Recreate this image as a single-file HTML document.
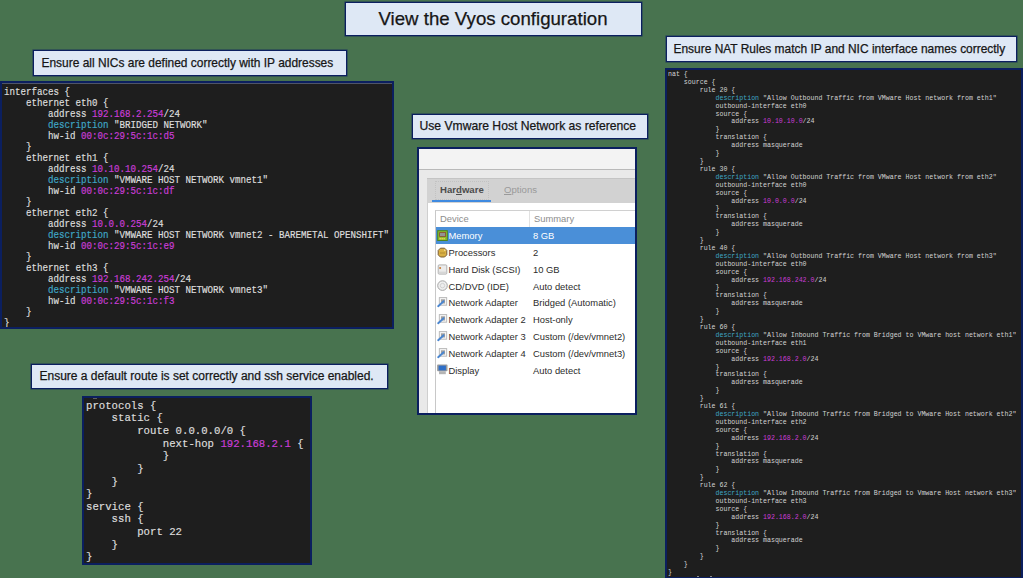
<!DOCTYPE html>
<html><head><meta charset="utf-8">
<style>
html,body{margin:0;padding:0;}
body{width:1023px;height:578px;overflow:hidden;background:#48734f;position:relative;font-family:"Liberation Sans",sans-serif;}
.lbl{position:absolute;box-sizing:border-box;background:#dee8f5;border:1.5px solid #0b1f5f;box-shadow:0 0 0 0.6px rgba(11,31,95,0.6);color:#161616;white-space:nowrap;}
.lbl span{-webkit-text-stroke:0.25px #161616;}
.lbl span{position:absolute;left:0;top:0;transform-origin:0 0;}
.code{position:absolute;box-sizing:border-box;background:#1e1e1e;border:2px solid #0b1f5f;overflow:hidden;}
.code pre{position:absolute;margin:0;font-family:"Liberation Mono",monospace;color:#dcdcdc;white-space:pre;-webkit-text-stroke:0.2px currentColor;}
.p{color:#c93dd6;}
.c{color:#3fa6c6;}
</style></head>
<body>
<!-- title -->
<div class="lbl" style="left:345px;top:2px;width:297px;height:34px;">
  <span style="left:32.5px;top:5.3px;font-size:18.65px;">View the Vyos configuration</span>
</div>
<!-- labels -->
<div class="lbl" style="left:33px;top:50px;width:314px;height:25.5px;">
  <span style="left:7.5px;top:4.5px;font-size:11.95px;">Ensure all NICs are defined correctly with IP addresses</span>
</div>
<div class="lbl" style="left:411.5px;top:113.5px;width:236px;height:25px;">
  <span style="left:7px;top:4.5px;font-size:12.15px;">Use Vmware Host Network as reference</span>
</div>
<div class="lbl" style="left:31px;top:363.5px;width:357px;height:25px;">
  <span style="left:7.5px;top:4.5px;font-size:12px;">Ensure a default route is set correctly and ssh service enabled.</span>
</div>
<div class="lbl" style="left:665.5px;top:36px;width:351px;height:25.5px;">
  <span style="left:7px;top:4.5px;font-size:11.95px;">Ensure NAT Rules match IP and NIC interface names correctly</span>
</div>

<!-- code 1 -->
<div class="code" style="left:0px;top:81px;width:394px;height:248px;box-shadow:inset 0 1px 0 #4f5568;">
<pre style="left:1.5px;top:4px;font-size:10.5px;line-height:11px;transform:scaleX(0.873);transform-origin:0 0;">interfaces {
    ethernet eth0 {
        address <span class="p">192.168.2.254</span>/24
        <span class="c">description</span> "BRIDGED NETWORK"
        hw-id <span class="p">00:0c:29:5c:1c:d5</span>
    }
    ethernet eth1 {
        address <span class="p">10.10.10.254</span>/24
        <span class="c">description</span> "VMWARE HOST NETWORK vmnet1"
        hw-id <span class="p">00:0c:29:5c:1c:df</span>
    }
    ethernet eth2 {
        address <span class="p">10.0.0.254</span>/24
        <span class="c">description</span> "VMWARE HOST NETWORK vmnet2 - BAREMETAL OPENSHIFT"
        hw-id <span class="p">00:0c:29:5c:1c:e9</span>
    }
    ethernet eth3 {
        address <span class="p">192.168.242.254</span>/24
        <span class="c">description</span> "VMWARE HOST NETWORK vmnet3"
        hw-id <span class="p">00:0c:29:5c:1c:f3</span>
    }
}</pre>
</div>

<!-- code 2 -->
<div class="code" style="left:82px;top:396px;width:230px;height:169px;">
<pre style="left:2px;top:1.8px;font-size:11.8px;line-height:12.63px;transform:scaleX(0.904);transform-origin:0 0;">protocols {
    static {
        route 0.0.0.0/0 {
            next-hop <span class="p">192.168.2.1</span> {
            }
        }
    }
}
service {
    ssh {
        port 22
    }
}</pre>
<div style="position:absolute;left:9px;top:0px;width:4px;height:1px;background:#5f5f5f;"></div>
</div>

<!-- code 3 NAT -->
<div class="code" style="left:665px;top:68px;width:358px;height:511px;">
<pre style="left:1px;top:1px;color:#d2d2d2;-webkit-text-stroke:0;font-size:7.3px;line-height:7.9px;transform:scaleX(0.9041);transform-origin:0 0;">nat {
    source {
        rule 20 {
            <span class="c">description</span> "Allow Outbound Traffic from VMware Host network from eth1"
            outbound-interface eth0
            source {
                address <span class="p">10.10.10.0</span>/24
            }
            translation {
                address masquerade
            }
        }
        rule 30 {
            <span class="c">description</span> "Allow Outbound Traffic from VMware Host network from eth2"
            outbound-interface eth0
            source {
                address <span class="p">10.0.0.0</span>/24
            }
            translation {
                address masquerade
            }
        }
        rule 40 {
            <span class="c">description</span> "Allow Outbound Traffic from VMware Host network from eth3"
            outbound-interface eth0
            source {
                address <span class="p">192.168.242.0</span>/24
            }
            translation {
                address masquerade
            }
        }
        rule 60 {
            <span class="c">description</span> "Allow Inbound Traffic from Bridged to VMware host network eth1"
            outbound-interface eth1
            source {
                address <span class="p">192.168.2.0</span>/24
            }
            translation {
                address masquerade
            }
        }
        rule 61 {
            <span class="c">description</span> "Allow Inbound Traffic from Bridged to VMware Host network eth2"
            outbound-interface eth2
            source {
                address <span class="p">192.168.2.0</span>/24
            }
            translation {
                address masquerade
            }
        }
        rule 62 {
            <span class="c">description</span> "Allow Inbound Traffic from Bridged to Vmware Host network eth3"
            outbound-interface eth3
            source {
                address <span class="p">192.168.2.0</span>/24
            }
            translation {
                address masquerade
            }
        }
    }
}</pre>
<div style="position:absolute;left:30px;top:506px;width:2px;height:1px;background:#8a8a8a;"></div>
<div style="position:absolute;left:43px;top:506px;width:2px;height:1px;background:#8a8a8a;"></div>
</div>

<!-- VMware window -->
<div id="vm" style="position:absolute;left:417px;top:147px;width:220px;height:268px;box-sizing:border-box;border:2px solid #0b1f5f;background:#e9e9e9;overflow:hidden;font-family:'Liberation Sans',sans-serif;">
 <div style="position:absolute;left:0;top:0;width:216px;height:20px;background:#f3f3f3;border-bottom:1px solid #b9b9b9;"></div>
 <div style="position:absolute;left:8px;top:29px;width:208px;height:25px;background:#d2d2d2;border-top:1px solid #c4c4c4;"></div>
 <div style="position:absolute;left:16px;top:32px;width:54px;height:19px;border:1px dotted #c2c2c2;box-sizing:border-box;"></div>
 <div style="position:absolute;left:13px;top:51px;width:58.5px;height:2px;background:#3f8ae0;"></div>
 <div style="position:absolute;left:21px;top:35.2px;font-size:9.6px;font-weight:bold;color:#4c4c4c;">Har<u>d</u>ware</div>
 <div style="position:absolute;left:85px;top:35.2px;font-size:9.6px;color:#9a9a9a;"><u>O</u>ptions</div>
 <div style="position:absolute;left:8px;top:54px;width:208px;height:210px;background:#ffffff;border-left:1px solid #cfcfcf;box-sizing:border-box;"></div>
 <div style="position:absolute;left:16px;top:61px;width:200px;height:210px;border-left:1px solid #c8c8c8;border-top:1px solid #d0d0d0;box-sizing:border-box;"></div>
 <div style="position:absolute;left:110px;top:62px;width:1px;height:16px;background:#e2e2e2;"></div>
 <div style="position:absolute;left:21px;top:64px;font-size:9.4px;color:#8d8d8d;">Device</div>
 <div style="position:absolute;left:115px;top:64px;font-size:9.4px;color:#8d8d8d;">Summary</div>
 <div style="position:absolute;left:17px;top:78.0px;width:199px;height:16.7px;background:#4a8fd8;"></div>
 <div style="position:absolute;left:18px;top:81.0px;"><svg style="display:block" width="12" height="12" viewBox="0 0 12 12"><rect x="0.7" y="0.7" width="9.6" height="9.8" fill="#8cbf2e" stroke="#4a8420" stroke-width="1"/><rect x="2.6" y="2.6" width="6" height="3.8" fill="#939393" stroke="#8a4a30" stroke-width="0.8"/><rect x="2.5" y="8" width="1.3" height="1.4" fill="#f5d35a"/><rect x="4.5" y="8" width="1.3" height="1.4" fill="#f5d35a"/><rect x="6.5" y="8" width="1.3" height="1.4" fill="#f5d35a"/></svg></div>
 <div style="position:absolute;left:29.5px;top:81.2px;font-size:9.4px;color:#ffffff;white-space:nowrap;">Memory</div>
 <div style="position:absolute;left:114px;top:81.2px;font-size:9.4px;color:#ffffff;white-space:nowrap;">8 GB</div>
 <div style="position:absolute;left:18px;top:97.8px;"><svg style="display:block" width="12" height="12" viewBox="0 0 12 12"><path d="M3.4 1.2H7.6L9.8 3.4V7.8L7.6 10H3.4L1.2 7.8V3.4Z" fill="#d9b044" stroke="#7a5c32" stroke-width="1"/><rect x="3" y="5.6" width="5" height="0.8" fill="#a8822e"/><rect x="7" y="2.6" width="1.4" height="1.2" fill="#f3e2a0"/></svg></div>
 <div style="position:absolute;left:29.5px;top:98.0px;font-size:9.4px;color:#2c2c2c;white-space:nowrap;">Processors</div>
 <div style="position:absolute;left:114px;top:98.0px;font-size:9.4px;color:#2c2c2c;white-space:nowrap;">2</div>
 <div style="position:absolute;left:18px;top:114.6px;"><svg style="display:block" width="12" height="12" viewBox="0 0 12 12"><rect x="1.2" y="0.9" width="8.6" height="9.2" rx="1" fill="#ebebeb" stroke="#a8a8a8" stroke-width="0.9"/><rect x="1.7" y="7.6" width="7.6" height="2" fill="#d6d6d6"/><circle cx="3.1" cy="4.1" r="1" fill="#c87a30"/></svg></div>
 <div style="position:absolute;left:29.5px;top:114.8px;font-size:9.4px;color:#2c2c2c;white-space:nowrap;">Hard Disk (SCSI)</div>
 <div style="position:absolute;left:114px;top:114.8px;font-size:9.4px;color:#2c2c2c;white-space:nowrap;">10 GB</div>
 <div style="position:absolute;left:18px;top:131.4px;"><svg style="display:block" width="12" height="12" viewBox="0 0 12 12"><circle cx="5.5" cy="5.6" r="4.8" fill="#eeeeee" stroke="#a6a6a6" stroke-width="1"/><circle cx="5.5" cy="5.6" r="2.2" fill="none" stroke="#cacaca" stroke-width="0.8"/></svg></div>
 <div style="position:absolute;left:29.5px;top:131.6px;font-size:9.4px;color:#2c2c2c;white-space:nowrap;">CD/DVD (IDE)</div>
 <div style="position:absolute;left:114px;top:131.6px;font-size:9.4px;color:#2c2c2c;white-space:nowrap;">Auto detect</div>
 <div style="position:absolute;left:18px;top:148.2px;"><svg style="display:block" width="12" height="12" viewBox="0 0 12 12"><rect x="2.3" y="0.6" width="7.4" height="7.6" fill="#f4f4f4" stroke="#b5b5b5" stroke-width="0.9"/><rect x="4" y="2.3" width="4" height="4.2" fill="#a0a0a0"/><path d="M1.2 9.2L6.6 4.2" stroke="#4a86d0" stroke-width="1.9" stroke-linecap="round"/></svg></div>
 <div style="position:absolute;left:29.5px;top:148.4px;font-size:9.4px;color:#2c2c2c;white-space:nowrap;">Network Adapter</div>
 <div style="position:absolute;left:114px;top:148.4px;font-size:9.4px;color:#2c2c2c;white-space:nowrap;">Bridged (Automatic)</div>
 <div style="position:absolute;left:18px;top:165.0px;"><svg style="display:block" width="12" height="12" viewBox="0 0 12 12"><rect x="2.3" y="0.6" width="7.4" height="7.6" fill="#f4f4f4" stroke="#b5b5b5" stroke-width="0.9"/><rect x="4" y="2.3" width="4" height="4.2" fill="#a0a0a0"/><path d="M1.2 9.2L6.6 4.2" stroke="#4a86d0" stroke-width="1.9" stroke-linecap="round"/></svg></div>
 <div style="position:absolute;left:29.5px;top:165.2px;font-size:9.4px;color:#2c2c2c;white-space:nowrap;">Network Adapter 2</div>
 <div style="position:absolute;left:114px;top:165.2px;font-size:9.4px;color:#2c2c2c;white-space:nowrap;">Host-only</div>
 <div style="position:absolute;left:18px;top:181.8px;"><svg style="display:block" width="12" height="12" viewBox="0 0 12 12"><rect x="2.3" y="0.6" width="7.4" height="7.6" fill="#f4f4f4" stroke="#b5b5b5" stroke-width="0.9"/><rect x="4" y="2.3" width="4" height="4.2" fill="#a0a0a0"/><path d="M1.2 9.2L6.6 4.2" stroke="#4a86d0" stroke-width="1.9" stroke-linecap="round"/></svg></div>
 <div style="position:absolute;left:29.5px;top:182.0px;font-size:9.4px;color:#2c2c2c;white-space:nowrap;">Network Adapter 3</div>
 <div style="position:absolute;left:114px;top:182.0px;font-size:9.4px;color:#2c2c2c;white-space:nowrap;">Custom (/dev/vmnet2)</div>
 <div style="position:absolute;left:18px;top:198.6px;"><svg style="display:block" width="12" height="12" viewBox="0 0 12 12"><rect x="2.3" y="0.6" width="7.4" height="7.6" fill="#f4f4f4" stroke="#b5b5b5" stroke-width="0.9"/><rect x="4" y="2.3" width="4" height="4.2" fill="#a0a0a0"/><path d="M1.2 9.2L6.6 4.2" stroke="#4a86d0" stroke-width="1.9" stroke-linecap="round"/></svg></div>
 <div style="position:absolute;left:29.5px;top:198.8px;font-size:9.4px;color:#2c2c2c;white-space:nowrap;">Network Adapter 4</div>
 <div style="position:absolute;left:114px;top:198.8px;font-size:9.4px;color:#2c2c2c;white-space:nowrap;">Custom (/dev/vmnet3)</div>
 <div style="position:absolute;left:18px;top:215.4px;"><svg style="display:block" width="12" height="12" viewBox="0 0 12 12"><rect x="0.1" y="0.6" width="10.4" height="6.6" rx="0.8" fill="#9c9c9c"/><rect x="1.6" y="1.6" width="7.3" height="4.8" fill="#2f6fc8"/><rect x="2" y="7.2" width="6.8" height="3" fill="#b4b4b4"/></svg></div>
 <div style="position:absolute;left:29.5px;top:215.6px;font-size:9.4px;color:#2c2c2c;white-space:nowrap;">Display</div>
 <div style="position:absolute;left:114px;top:215.6px;font-size:9.4px;color:#2c2c2c;white-space:nowrap;">Auto detect</div>
</div>
</body></html>
